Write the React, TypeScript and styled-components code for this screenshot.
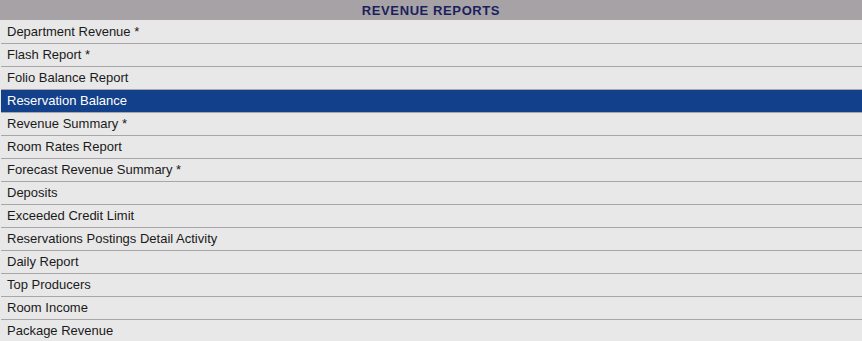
import styled, { createGlobalStyle } from "styled-components";

const reports = [
  "Department Revenue *",
  "Flash Report *",
  "Folio Balance Report",
  "Reservation Balance",
  "Revenue Summary *",
  "Room Rates Report",
  "Forecast Revenue Summary *",
  "Deposits",
  "Exceeded Credit Limit",
  "Reservations Postings Detail Activity",
  "Daily Report",
  "Top Producers",
  "Room Income",
  "Package Revenue",
];

const selected = "Reservation Balance";

const GlobalStyle = createGlobalStyle`
  html, body {
    margin: 0;
    padding: 0;
    background: #e8e8e8;
    font-family: "Liberation Sans", Arial, sans-serif;
  }
`;

export default function App() {
  return (
    <>
      <GlobalStyle />
      <StyledPanel>
        <StyledHeader>REVENUE REPORTS</StyledHeader>
        <StyledList>
          {reports.map((name) => (
            <StyledRow key={name} active={name === selected}>
              {name}
            </StyledRow>
          ))}
        </StyledList>
      </StyledPanel>
    </>
  );
}

const StyledPanel = styled.div`
  width: 862px;
  background: #e8e8e8;
`;

const StyledHeader = styled.div`
  height: 20px;
  line-height: 22px;
  background: #a7a2a5;
  color: #1b1f5e;
  font-size: 13px;
  font-weight: bold;
  letter-spacing: 0.6px;
  text-align: center;
  margin-bottom: 1px;
`;

const StyledList = styled.div`
  display: flex;
  flex-direction: column;
`;

const StyledRow = styled.div.withConfig({
  shouldForwardProp: (prop) => prop !== "active",
})<{ active: boolean }>`
  height: 22px;
  line-height: 22px;
  border-bottom: 1px solid #a9a5a8;
  padding-left: 6px;
  margin-left: 1px;
  font-size: 13px;
  color: ${({ active }) => (active ? "#ffffff" : "#1a1a1a")};
  background: ${({ active }) => (active ? "#12408a" : "transparent")};
  white-space: nowrap;
`;
